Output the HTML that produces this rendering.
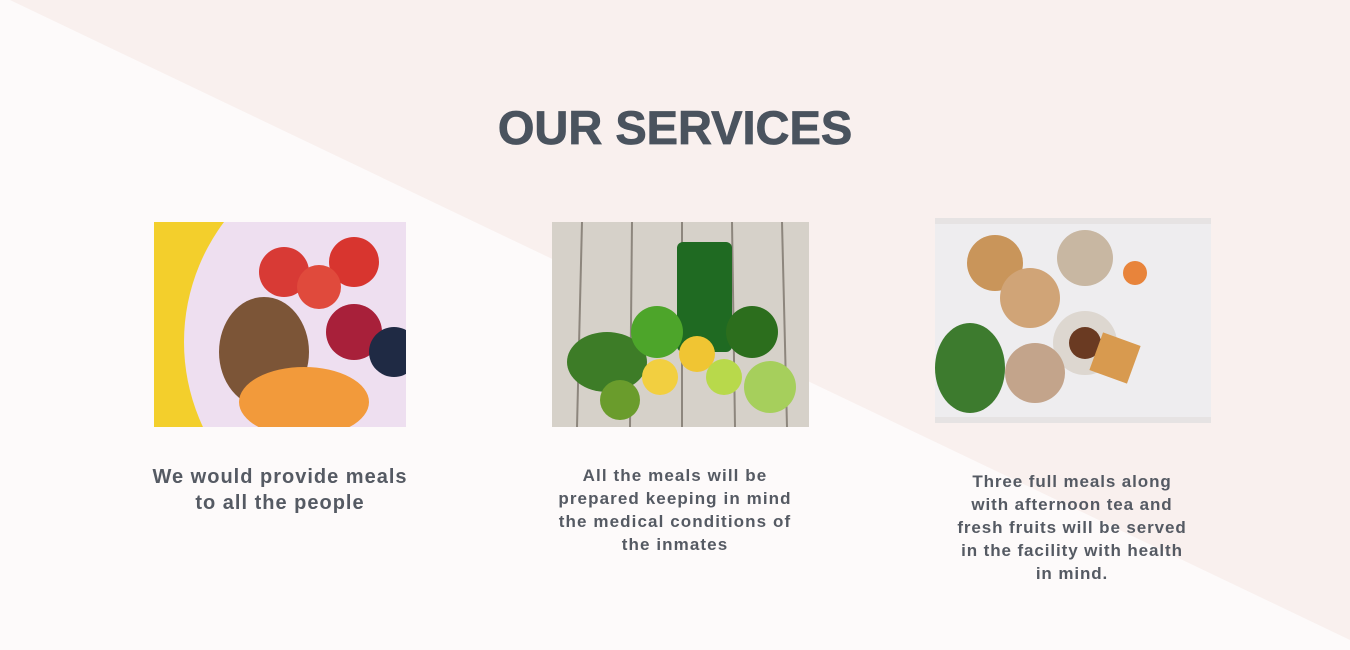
<!DOCTYPE html>
<html><head><meta charset="utf-8"><style>
body{margin:0;width:1350px;height:650px;overflow:hidden;background:#fdfafa;position:relative;font-family:"Liberation Sans",sans-serif}
.bg{position:absolute;left:0;top:0}
h1{position:absolute;left:0;width:1350px;top:100px;margin:0;text-align:center;font-size:47px;font-weight:bold;color:#4a535e;letter-spacing:0px;-webkit-text-stroke:0.8px #4a535e}
.t{position:absolute;text-align:center;font-weight:bold;color:#555a63}
.img{position:absolute;overflow:hidden}
</style></head><body>
<svg class="bg" width="1350" height="650"><polygon points="10,0 1350,0 1350,640" fill="#f9f0ee"/></svg>
<h1>OUR SERVICES</h1>

<div class="img" style="left:154px;top:222px;width:252px;height:205px">
<svg width="252" height="205"><rect width="252" height="205" fill="#f3cf2c"/>
<circle cx="230" cy="120" r="200" fill="#eedff0"/>
<circle cx="130" cy="50" r="25" fill="#d83a35"/><circle cx="200" cy="40" r="25" fill="#d8352f"/><circle cx="165" cy="65" r="22" fill="#e04a3c"/>
<ellipse cx="110" cy="130" rx="45" ry="55" fill="#7c5537"/>
<circle cx="200" cy="110" r="28" fill="#a8203a"/><circle cx="240" cy="130" r="25" fill="#1f2a44"/>
<ellipse cx="150" cy="180" rx="65" ry="35" fill="#f29a3b"/>
</svg></div>

<div class="img" style="left:552px;top:222px;width:257px;height:205px">
<svg width="257" height="205"><rect width="257" height="205" fill="#d6d1c9"/>
<g stroke="#8d867d" stroke-width="2"><line x1="30" y1="0" x2="25" y2="205"/><line x1="80" y1="0" x2="78" y2="205"/><line x1="130" y1="0" x2="130" y2="205"/><line x1="180" y1="0" x2="183" y2="205"/><line x1="230" y1="0" x2="235" y2="205"/></g>
<rect x="125" y="20" width="55" height="110" rx="6" fill="#1f6a22"/>
<ellipse cx="55" cy="140" rx="40" ry="30" fill="#3d7c27"/>
<circle cx="105" cy="110" r="26" fill="#4da52a"/><circle cx="200" cy="110" r="26" fill="#2c6e1d"/>
<circle cx="145" cy="132" r="18" fill="#f0c533"/><circle cx="108" cy="155" r="18" fill="#f2cf40"/><circle cx="172" cy="155" r="18" fill="#b8d94b"/>
<circle cx="218" cy="165" r="26" fill="#a6cf5c"/><circle cx="68" cy="178" r="20" fill="#6a9c2c"/>
</svg></div>

<div class="img" style="left:935px;top:218px;width:276px;height:205px;background:#e6e3e3">
<svg width="276" height="205"><rect x="0" y="6" width="276" height="193" fill="#eeedef"/>
<circle cx="60" cy="45" r="28" fill="#c9955a"/><circle cx="150" cy="40" r="28" fill="#c8b7a2"/><circle cx="95" cy="80" r="30" fill="#d0a477"/>
<circle cx="150" cy="125" r="32" fill="#ddd7d0"/><circle cx="150" cy="125" r="16" fill="#6a3a22"/>
<rect x="160" y="120" width="40" height="40" fill="#d89a4f" transform="rotate(20 180 140)"/>
<ellipse cx="35" cy="150" rx="35" ry="45" fill="#3d7b2e"/><circle cx="100" cy="155" r="30" fill="#c3a48b"/>
<circle cx="200" cy="55" r="12" fill="#e8843b"/>
</svg></div>

<div class="t" style="left:110px;width:340px;top:464px;font-size:20px;line-height:26px;letter-spacing:1px">We would provide meals<br>to all the people</div>
<div class="t" style="left:515px;width:320px;top:464px;font-size:17px;line-height:23px;letter-spacing:1.1px">All the meals will be<br>prepared keeping in mind<br>the medical conditions of<br>the inmates</div>
<div class="t" style="left:912px;width:320px;top:470px;font-size:17px;line-height:23px;letter-spacing:0.9px">Three full meals along<br>with afternoon tea and<br>fresh fruits will be served<br>in the facility with health<br>in mind.</div>
</body></html>
